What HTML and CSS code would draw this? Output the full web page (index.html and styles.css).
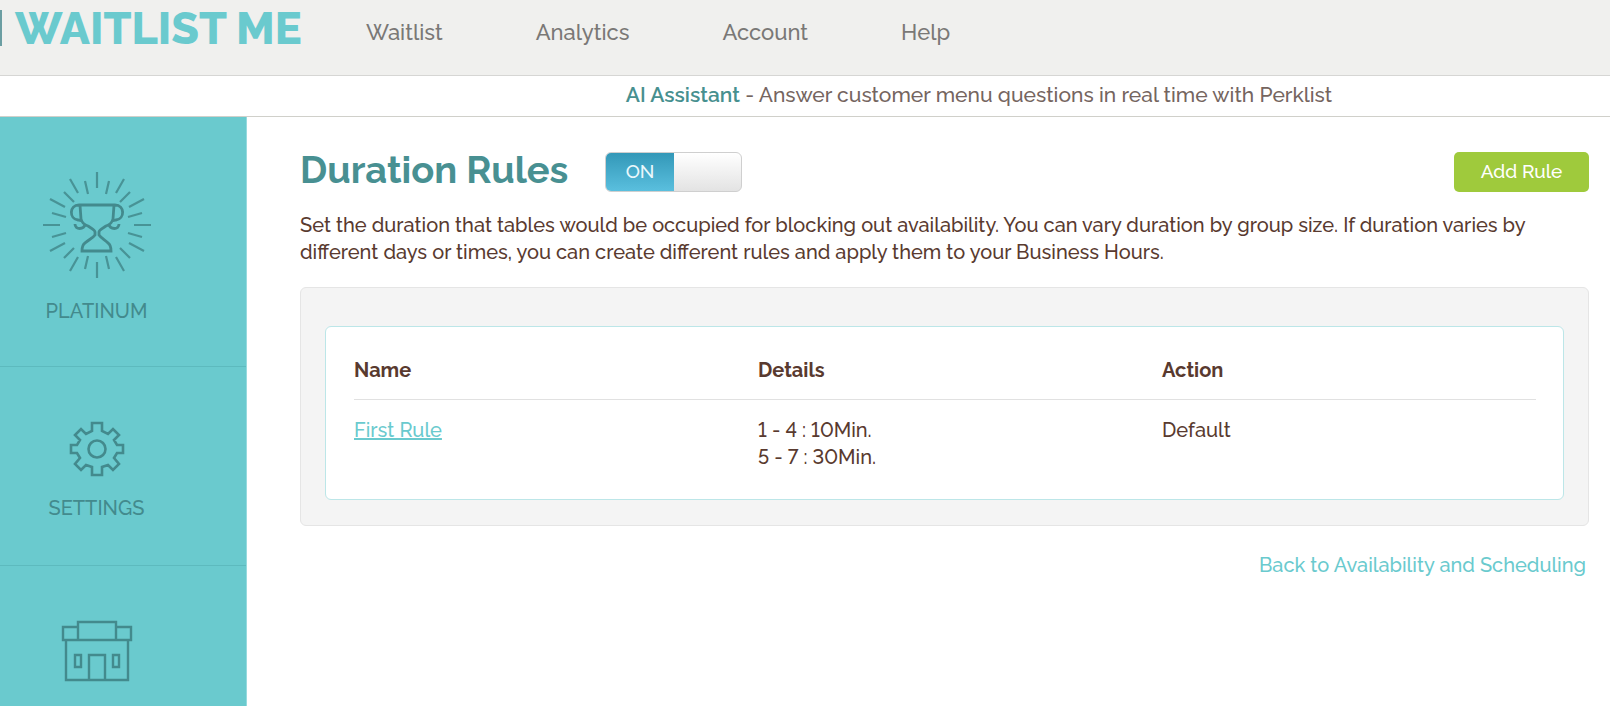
FILE: index.html
```html
<!DOCTYPE html>
<html lang="en">
<head>
<meta charset="utf-8">
<title>Duration Rules - Waitlist Me</title>
<link rel="stylesheet" href="styles.css">
</head>
<body>
<header class="topbar">
  <a class="logo" href="#">WAITLIST ME</a>
  <nav class="topnav">
    <a href="#">Waitlist</a>
    <a href="#">Analytics</a>
    <a href="#">Account</a>
    <a href="#">Help</a>
  </nav>
</header>
<p class="notice"><a href="#">AI Assistant</a> - Answer customer menu questions in real time with Perklist</p>
<div class="layout">
  <nav class="sidebar">
    <a class="side-item side-plan" href="#">
      <svg width="110" height="110" viewBox="0 0 110 110" fill="none" stroke="#438a8d" stroke-width="2.2" aria-hidden="true">
        <g opacity=".85">
          <path d="M55 2v16M55 92v16M1 55h17M92 55h17"/>
          <path d="M28 9l8 14M43 11l3 13M67 11l-3 13M82 9l-8 14M22 22l10 10M88 22L78 32M8 29l15 8M102 29l-15 8M10 43l14 4M100 43l-14 4"/>
          <path d="M28 101l8-14M43 99l3-13M67 99l-3-13M82 101l-8-14M22 88l10-10M88 88L78 78M8 81l15-8M102 81l-15-8M10 67l14-4M100 67l-14-4"/>
        </g>
        <path stroke-width="2.8" d="M37 35H73M37 35C27 35 27 49 36 50L40 51M73 35C83 35 83 49 74 50L70 51M38 35L39 49C40 53 43 55 46 56C49 58 53 60 53 62V65C51 68 46 70 43 73Q40 75 40 81H69Q69 75 66 73C63 70 59 68 57 65V62C57 60 61 58 64 56C67 55 70 53 71 49L72 35M33 54C33 60 42 60 43 54M67 54C68 60 77 60 77 54"/>
      </svg>
      <span>PLATINUM</span>
    </a>
    <a class="side-item" href="#">
      <svg width="56" height="56" viewBox="0 0 56 56" fill="none" stroke="#438a8d" stroke-width="2.6" aria-hidden="true">
        <path d="M23 2h10v8l6 3 5-5 6 6-5 5 3 5h6v8h-6l-3 5 5 6-6 6-5-5-6 2v8H23v-8l-6-2-5 5-6-6 5-6-3-5H2v-8h6l3-5-5-5 6-6 5 5 6-3z"/>
        <circle cx="28" cy="28" r="8.500"/>
      </svg>
      <span>SETTINGS</span>
    </a>
    <a class="side-item" href="#" aria-label="Business">
      <svg width="72" height="62" viewBox="0 0 72 62" fill="none" stroke="#438a8d" stroke-width="2.4" aria-hidden="true">
        <path d="M17 7H2v13h68V7H55M17 20V2h38v18M5 20v40h62V20M28 60V35h16v25M14 35h6v12h-6zM52 35h6v12h-6z"/>
      </svg>
    </a>
  </nav>
  <main class="content">
    <div class="heading">
      <h1>Duration Rules</h1>
      <label class="switch"><input type="checkbox" checked aria-label="Duration Rules enabled"><span>ON</span></label>
      <button class="add" type="button">Add Rule</button>
    </div>
    <p class="intro">Set the duration that tables would be occupied for blocking out availability. You can vary duration by group size. If duration varies by different days or times, you can create different rules and apply them to your Business Hours.</p>
    <section class="panel">
      <div class="card">
        <table class="rules">
          <thead><tr><th>Name</th><th>Details</th><th>Action</th></tr></thead>
          <tbody><tr><td><a href="#">First Rule</a></td><td>1 - 4 : 10Min.<br>5 - 7 : 30Min.</td><td>Default</td></tr></tbody>
        </table>
      </div>
    </section>
    <a class="back" href="#">Back to Availability and Scheduling</a>
  </main>
</div>
</body>
</html>
```
FILE: styles.css
```css
* { box-sizing: border-box; }
html, body { height: 100%; }
body {
  margin: 0;
  display: flex;
  flex-direction: column;
  overflow: hidden;
  background: #fff;
  color: #593a2f;
  font: 500 20px/27px Raleway, Lato, sans-serif;
  font-variant-numeric: lining-nums;
}
.topbar {
  flex: none;
  display: flex;
  height: 76px;
  background: #f0f0ee;
  border-bottom: 1px solid #d6d6d4;
}
.logo {
  width: 366px;
  height: 36px;
  margin-top: 10px;
  padding-left: 13px;
  border-left: 2px solid #6b9ea2;
  color: #6acace;
  font-size: 45px;
  font-weight: 800;
  line-height: 38px;
  text-decoration: none;
}
.topnav { display: flex; gap: 93px; padding-top: 19px; }
.topnav a { color: #7a7876; font-size: 22px; text-decoration: none; }
.notice {
  flex: none;
  margin: 0;
  height: 41px;
  padding: 5px 0 0 348px;
  border-bottom: 1px solid #d0d0ca;
  color: #75655f;
  font-size: 21px;
  text-align: center;
}
.notice a { color: #47908f; font-weight: 600; text-decoration: none; }
.layout { flex: 1; display: flex; min-height: 0; }
.sidebar {
  flex: none;
  width: 247px;
  overflow: hidden;
  background: #6acace;
  border-right: 1px solid #96dade;
}
.side-item {
  display: flex;
  flex-direction: column;
  align-items: center;
  gap: 18px;
  height: 199px;
  padding: 54px 53px 0 0;
  border-bottom: 1px solid #5dbabe;
  color: #438a8d;
  text-decoration: none;
}
.side-plan { height: 250px; padding-top: 53px; }
.content {
  flex: 1;
  display: flex;
  flex-direction: column;
  padding: 35px 21px 0 53px;
}
.heading { display: flex; align-items: center; height: 40px; }
h1 { margin: 0; color: #489092; font-size: 38px; font-weight: 700; line-height: 36px; align-self: flex-start; }
.switch {
  display: flex;
  width: 137px;
  height: 40px;
  margin-left: 37px;
  overflow: hidden;
  border: 1px solid #cfcfcf;
  border-radius: 6px;
  background: linear-gradient(#fff, #e3e3e3);
}
.switch input { position: absolute; opacity: 0; }
.switch span {
  width: 50%;
  background: linear-gradient(#3398b8, #5abfde);
  color: #eaf8fc;
  font-size: 19px;
  line-height: 36px;
  text-align: center;
}
.add {
  width: 135px;
  height: 40px;
  margin-left: auto;
  padding: 0 0 2px;
  border: 0;
  border-radius: 5px;
  background: #9fca3c;
  color: #fff;
  font: inherit;
  font-size: 19px;
}
.intro { margin: 20px 0 21px; }
.panel { padding: 38px 24px 25px; border: 1px solid #e5e5e5; border-radius: 6px; background: #f4f4f4; }
.card { padding: 22px 27px 11px 28px; border: 1px solid #bce6e8; border-radius: 6px; background: #fff; }
.rules { width: 100%; border-collapse: collapse; table-layout: fixed; text-align: left; }
.rules th, .rules td { padding: 0; vertical-align: top; }
.rules th { width: 404px; padding: 8px 0 15px; border-bottom: 1px solid #e1e1e1; }
.rules th:last-child { width: auto; }
.rules td { padding: 17px 0; }
.rules a { color: #6acace; }
.back { align-self: flex-end; margin-top: 26px; padding-right: 3px; color: #6acace; text-decoration: none; }
```
